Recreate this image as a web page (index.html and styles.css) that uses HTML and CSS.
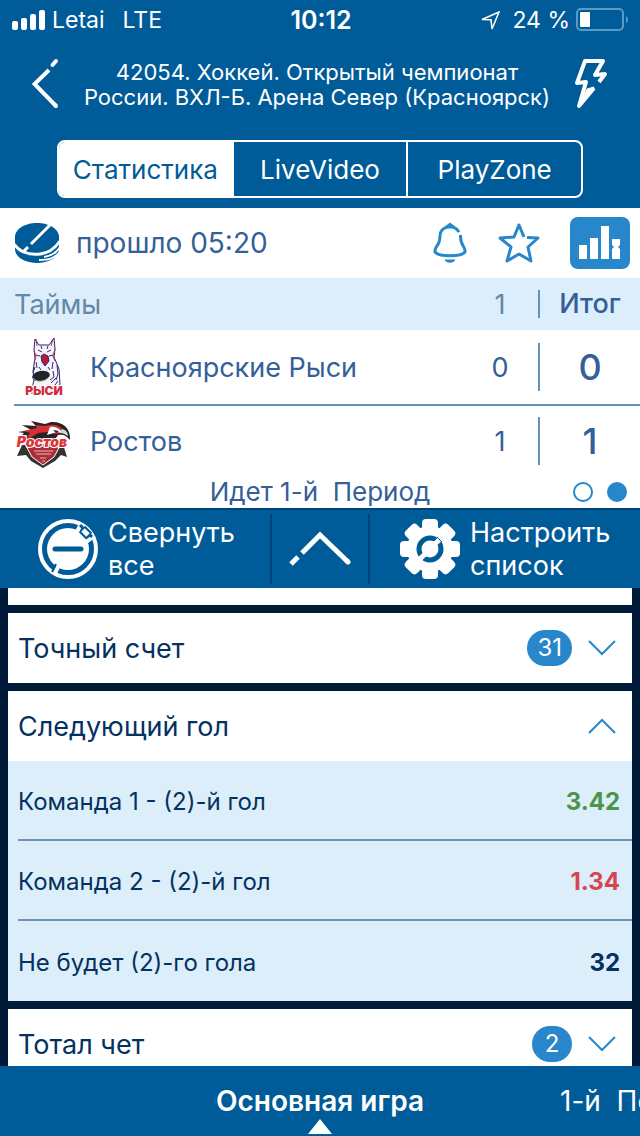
FILE: index.html
```html
<!DOCTYPE html>
<html lang="ru">
<head>
  <meta charset="UTF-8">
  <meta name="viewport" content="width=device-width, initial-scale=1.0">
  <title>Красноярские Рыси - Ростов</title>
  <link rel="stylesheet" href="styles.css">
</head>
<body>
  <header class="header">
    <div class="status-bar">
      <div class="status-left">
        <svg width="34" height="20" viewBox="0 0 34 20" fill="#fff">
          <rect x="0" y="11" width="6" height="9" rx="2"/>
          <rect x="9" y="8" width="6" height="12" rx="2"/>
          <rect x="18" y="4" width="6" height="16" rx="2"/>
          <rect x="27" y="0" width="6" height="20" rx="2"/>
        </svg>
        <span class="carrier">Letai</span>
        <span>LTE</span>
      </div>
      <span class="clock">10:12</span>
      <div class="status-right">
        <svg class="location" width="20" height="19" viewBox="0 0 20 19" fill="none" stroke="#fff" stroke-width="1.500">
          <path d="M2 8.500L19 1L12 18L11 8.800Z"/>
        </svg>
        <span>24 %</span>
        <svg width="54" height="24" viewBox="0 0 54 24">
          <rect x="1" y="1" width="46" height="21" rx="4" fill="none" stroke="#5c9ac6" stroke-width="2"/>
          <rect x="4" y="4" width="10" height="15" rx="1" fill="#fff"/>
          <path d="M50 8a4 4 0 0 1 0 7z" fill="#5c9ac6"/>
        </svg>
      </div>
    </div>

    <div class="title-row">
      <button class="icon-btn" aria-label="Назад">
        <svg width="28" height="52" viewBox="0 0 28 52" fill="none" stroke="#fff" stroke-width="4" stroke-linecap="round">
          <path d="M24 3L20.500 7" />
          <path d="M17 12L2.500 26L24 48" stroke-linejoin="miter" stroke-linecap="butt"/>
          <path d="M23 47L24 48"/>
        </svg>
      </button>
      <h1>42054. Хоккей. Открытый чемпионат России. ВХЛ-Б. Арена Север (Красноярск)</h1>
      <button class="icon-btn" aria-label="Быстрая ставка">
        <svg width="34" height="52" viewBox="0 0 34 52" fill="none" stroke="#fff" stroke-width="4" stroke-linejoin="round">
          <path d="M25 24L31 16L21 17L29 3H11L3 25L12 24L5 48L20 30"/>
          <path d="M13 31L20 29L5 49Z" fill="#fff" stroke-width="1"/>
        </svg>
      </button>
    </div>

    <nav class="segments">
      <button class="active">Статистика</button>
      <button>LiveVideo</button>
      <button>PlayZone</button>
    </nav>
  </header>

  <section class="score">
    <div class="event-row">
      <svg width="46" height="42" viewBox="0 0 46 42">
        <path d="M1 15C1 7 11 1 23 1s22 6 22 14v12c0 8-10 14-22 14S1 35 1 27z" fill="#005b99"/>
        <g fill="none" stroke="#fff">
          <path d="M0 22C6 31 16 33 26 32S42 25 46 19" stroke-width="3"/>
          <path d="M36 3L17 22M14 25L9 30" stroke-width="3"/>
          <path d="M46 25C42 32 36 34 30 35M46 30C40 37 34 38 25 38" stroke-width="2"/>
        </g>
      </svg>
      <span class="elapsed">прошло 05:20</span>
      <button class="icon-btn" aria-label="Уведомления">
        <svg width="36" height="42" viewBox="0 0 36 42" fill="none" stroke="#2787ca" stroke-width="3" stroke-linejoin="round">
          <path d="M27 10C24 5 20 5 18 3C15 6 8 6 8 14C8 25 2 24 3 30C7 35 29 35 33 30C34 24 28 25 28.500 13"/>
          <path d="M18 1L12 6H24Z" fill="#2787ca" stroke-width="1"/>
          <path d="M13 38C15 41 21 41 23 38Z" fill="#2787ca" stroke-width="1"/>
        </svg>
      </button>
      <button class="icon-btn" aria-label="В избранное">
        <svg width="42" height="42" viewBox="0 0 42 42" fill="none" stroke="#2787ca" stroke-width="3" stroke-linejoin="round">
          <path d="M26 15L21 3L16 15L2 16L13 25L9 39L21 32L33 39L30 25L40 16L29 15.500"/>
        </svg>
      </button>
      <button class="icon-btn stats-btn" aria-label="Статистика матча">
        <svg width="42" height="34" viewBox="0 0 42 34" fill="#fff">
          <rect x="0" y="19" width="8" height="14"/>
          <rect x="11" y="12" width="8" height="21"/>
          <rect x="22" y="0" width="8" height="33"/>
          <path d="M33 13h8v6l-2 2 2 2v10h-8V23l2-2-2-2z"/>
        </svg>
      </button>
    </div>

    <table class="score-table">
      <thead>
        <tr>
          <th class="team-col">Таймы</th>
          <th class="period-col">1</th>
          <th class="total-col"><span>Итог</span></th>
        </tr>
      </thead>
      <tbody>
        <tr class="home">
          <td class="team-col">
            <div class="team">
              <svg width="60" height="60" viewBox="0 0 60 60">
                <path d="M21 2l4 6h10l5-7 1 11-1 8 5 12 1 15-4 9H17l3-13-1-9 2-13-1-9z" fill="#f4f3fa" stroke="#2b2767" stroke-width="1"/>
                <path d="M22 2l1 7M39 2l-2 7M20 13l2 7-2 5M41 12l-2 7 2 5" fill="none" stroke="#b52c57" stroke-width="1"/>
                <path d="M24 13l4 2M37 13l-4 2M22 18l4 1M39 18l-4 1M27 9l1 3M34 9l-1 3" stroke="#302970" stroke-width="1"/>
                <path d="M27 19l3-2 4 2 1 5-4 5-3-4z" fill="#b61c38" stroke="#302970" stroke-width="1"/>
                <path d="M22 25l1 6M21 30l-2 6M39 25l-1 7M43 28l1 9-2 6M39 34l1 6-4 3M37 46l5-5M41 48l3-4M34 30l2 3M25 30l2 3" fill="none" stroke="#302970" stroke-width="1"/>
                <ellipse cx="27" cy="39" rx="9" ry="5" fill="#20252a" transform="rotate(-12 27 39)"/>
                <path d="M19 41c4 5 12 4 17-2" fill="none" stroke="#a8b39a" stroke-width="1"/>
                <text x="30" y="58" text-anchor="middle" class="lynx-text">РЫСИ</text>
              </svg>
              <span>Красноярские Рыси</span>
            </div>
          </td>
          <td class="period-col">0</td>
          <td class="total-col"><span>0</span></td>
        </tr>
        <tr>
          <td class="team-col">
            <div class="team">
              <svg width="60" height="60" viewBox="0 0 60 60">
                <path d="M8 34l-5 11 9-1 5 6 12 7 12-7 6-6 6 2-4-13z" fill="#363133"/>
                <path d="M12 35l6 11 11 8 11-8 6-11z" fill="#a92e38" stroke="#fff" stroke-width="1"/>
                <path d="M4 21l13-2-9-5 14 1-5-5 14 3 6-2c10-1 20 5 19 18-4-5-7-6-12-5l-4 6H10l3-6-6 1 3-3z" fill="#272426"/>
                <path d="M9 20l14-3-2-3 11 1c8-3 15 0 19 6l-9 2-8-2-10 1-8 5-3-1 3-4z" fill="#d92d35"/>
                <path d="M36 16c5-1 10 2 13 6l-6-1-10 3z" fill="#fff"/>
                <path d="M48 18c4 1 6 4 6 7-3-2-5-3-8-3z" fill="#d8d8da"/>
                <path d="M39 19l6 1-3 2z" fill="#272426"/>
                <text x="28" y="36" text-anchor="middle" class="rostov-text">Ростов</text>
                <path d="M20 40h19M22 43h15M26 47h6M28 50h3" stroke="#e4b9b9" stroke-width="1"/>
              </svg>
              <span>Ростов</span>
            </div>
          </td>
          <td class="period-col">1</td>
          <td class="total-col"><span>1</span></td>
        </tr>
      </tbody>
    </table>

    <div class="period-status">
      <span>Идет 1-й&nbsp; Период</span>
      <div class="dots"><i></i><i class="on"></i></div>
    </div>
  </section>

  <div class="toolbar">
    <button class="tool">
      <svg width="60" height="60" viewBox="0 0 60 60">
        <circle cx="30" cy="30" r="28" fill="none" stroke="#fff" stroke-width="4"/>
        <circle cx="30" cy="30" r="21" fill="#fff"/>
        <path d="M38 15L43 5M47 24L56 17M16 56L21 46" stroke="#fff" stroke-width="4"/>
        <path d="M42 6L54 18" stroke="#005b99" stroke-width="3"/>
        <path d="M44 10L51 17" stroke="#005b99" stroke-width="9"/>
        <path d="M45 11L50 16" stroke="#fff" stroke-width="5"/>
        <path d="M14 53L18 45" stroke="#005b99" stroke-width="2"/>
        <path d="M17 30H43" stroke="#005b99" stroke-width="5" stroke-linecap="round"/>
      </svg>
      <span>Свернуть все</span>
    </button>
    <button class="tool tool-up" aria-label="Наверх">
      <svg width="62" height="36" viewBox="0 0 62 36" fill="none" stroke="#fff" stroke-width="5">
        <path d="M13 22L31 4L59 31"/>
        <path d="M58 30L59 31" stroke-linecap="round"/>
        <path d="M9 26L2 33"/>
      </svg>
    </button>
    <button class="tool tool-last">
      <svg width="60" height="60" viewBox="0 0 60 60">
        <g fill="#fff">
          <circle cx="30" cy="30" r="23"/>
          <rect x="22" y="0" width="16" height="60" rx="4"/>
          <rect x="22" y="0" width="16" height="60" rx="4" transform="rotate(45 30 30)"/>
          <rect x="22" y="0" width="16" height="60" rx="4" transform="rotate(90 30 30)"/>
          <rect x="22" y="0" width="16" height="60" rx="4" transform="rotate(135 30 30)"/>
        </g>
        <circle cx="30" cy="30" r="11" fill="none" stroke="#005b99" stroke-width="5"/>
        <path d="M34 26L42 18M18 42L26 34" stroke="#fff" stroke-width="5"/>
        <path d="M37 18L42 23" stroke="#005b99" stroke-width="1"/>
      </svg>
      <span>Настроить список</span>
    </button>
  </div>

  <main class="markets">
    <div class="market market-cut"></div>

    <div class="market">
      <button class="market-head">
        <span class="market-name">Точный счет</span>
        <span class="badge">31</span>
        <svg width="28" height="16" viewBox="0 0 28 16" fill="none" stroke="#2787ca" stroke-width="2"><path d="M1 1L14 14L27 1"/></svg>
      </button>
    </div>

    <div class="market">
      <button class="market-head">
        <span class="market-name">Следующий гол</span>
        <svg width="28" height="16" viewBox="0 0 28 16" fill="none" stroke="#2787ca" stroke-width="2"><path d="M1 15L14 2L27 15"/></svg>
      </button>
      <div class="odds">
        <button class="odd"><span>Команда 1 - (2)-й гол</span><b class="up">3.42</b></button>
        <button class="odd"><span>Команда 2 - (2)-й гол</span><b class="down">1.34</b></button>
        <button class="odd"><span>Не будет (2)-го гола</span><b>32</b></button>
      </div>
    </div>

    <div class="market">
      <button class="market-head">
        <span class="market-name">Тотал чет</span>
        <span class="badge">2</span>
        <svg width="28" height="16" viewBox="0 0 28 16" fill="none" stroke="#2787ca" stroke-width="2"><path d="M1 1L14 14L27 1"/></svg>
      </button>
    </div>
  </main>

  <nav class="bottom-tabs">
    <button class="active">Основная игра</button>
    <button class="next">1-й&nbsp; Период</button>
  </nav>
</body>
</html>
```
FILE: styles.css
```css
* { box-sizing: border-box; }
body {
  margin: 0;
  height: 100vh;
  display: flex;
  flex-direction: column;
  overflow: hidden;
  font-family: Inter, "Liberation Sans", sans-serif;
  background: #001b39;
  color: #345f98;
}
button {
  padding: 0;
  border: none;
  background: none;
  font: inherit;
  color: inherit;
  cursor: pointer;
}
svg { display: block; flex-shrink: 0; }
.icon-btn { flex-shrink: 0; }

/* header */
.header { background: #005b99; color: #fff; padding-bottom: 10px; }
.status-bar {
  display: grid;
  grid-template-columns: 1fr auto 1fr;
  align-items: center;
  height: 40px;
  padding: 0 10px 0 12px;
  font-size: 23px;
}
.status-left, .status-right { display: flex; align-items: center; gap: 6px; }
.status-right { justify-content: flex-end; }
.carrier { margin-right: 12px; }
.location { margin-right: 6px; }
.clock { font-size: 25px; font-weight: 600; }
.title-row {
  display: flex;
  align-items: center;
  justify-content: space-between;
  height: 88px;
  padding: 0 32px;
}
.title-row h1 {
  flex: 1;
  margin: 0 20px;
  padding-top: 2px;
  font-size: 22px;
  font-weight: 400;
  line-height: 25px;
  text-align: center;
}
.segments {
  display: flex;
  margin: 12px 57px 0;
  border: 2px solid #fff;
  border-radius: 8px;
  overflow: hidden;
}
.segments button {
  flex: 1;
  height: 54px;
  font-size: 26px;
}
.segments button + button { border-left: 2px solid #fff; }
.segments .active { background: #fff; color: #005b99; }

/* score */
.score { background: #fff; }
.event-row {
  display: flex;
  align-items: center;
  height: 70px;
  padding: 0 10px 0 14px;
}
.elapsed { flex: 1; margin-left: 16px; font-size: 28px; }
.event-row .icon-btn { margin-left: 30px; }
.stats-btn {
  display: grid;
  place-items: center;
  width: 60px;
  height: 52px;
  border-radius: 8px;
  background: #2787ca;
}
.score-table { width: 100%; border-spacing: 0; font-size: 27px; }
.score-table th, .score-table td { padding: 0; }
.score-table th { height: 52px; background: #dceefc; font-weight: 400; color: #6488a5; }
.score-table td { height: 70px; }
.score-table .home td { height: 76px; border-bottom: 2px solid #6590b8; }
.score-table .home .team-col { border-bottom: none; }
.home .team { height: 76px; border-bottom: 2px solid #6590b8; }
.score-table .team-col { text-align: left; padding-left: 14px; }
.team { display: flex; align-items: center; gap: 16px; }
.score-table .period-col { width: 76px; text-align: center; }
.total-col { width: 102px; }
.total-col span {
  display: block;
  height: 48px;
  border-left: 2px solid #6590b8;
  font-size: 36px;
  font-weight: 500;
  line-height: 48px;
  text-align: center;
}
th.total-col span { height: 28px; line-height: 28px; font-size: 27px; color: #345f98; }
.lynx-text { font: 900 12px Inter, sans-serif; fill: #d22c3f; stroke: #fff; stroke-width: 2px; paint-order: stroke; }
.rostov-text { font: italic 900 14px Inter, sans-serif; fill: #e23338; stroke: #fff; stroke-width: 2px; paint-order: stroke; }
.period-status {
  display: grid;
  grid-template-columns: 1fr auto 1fr;
  align-items: center;
  height: 32px;
  padding: 0 13px;
  font-size: 26px;
  line-height: 30px;
}
.period-status > span { grid-column: 2; }
.dots { display: flex; justify-content: flex-end; gap: 14px; }
.dots i { width: 20px; height: 20px; border: 2px solid #2787ca; border-radius: 50%; }
.dots .on { background: #2787ca; }

/* toolbar */
.toolbar {
  display: grid;
  grid-template-columns: minmax(0, 1fr) 100px minmax(0, 1fr);
  height: 80px;
  flex-shrink: 0;
  align-items: center;
  border-top: 2px solid #004379;
  background: #005b99;
  color: #fff;
}
.tool {
  display: flex;
  align-items: center;
  gap: 10px;
  height: 70px;
  padding-left: 38px;
  font-size: 27px;
  line-height: 33px;
  text-align: left;
}
.tool-up {
  justify-content: center;
  padding: 0;
  border: solid #004379;
  border-width: 0 2px;
}
.tool-last { padding-left: 30px; }

/* markets */
.markets {
  flex: 1;
  min-height: 0;
  overflow: hidden;
  display: flex;
  flex-direction: column;
  gap: 8px;
  padding: 0 8px;
}
.market { flex-shrink: 0; background: #fff; color: #04315f; }
.market-cut { height: 17px; }
.market-head {
  display: flex;
  align-items: center;
  width: 100%;
  height: 70px;
  padding: 0 16px 0 10px;
  font-size: 27px;
}
.market-name { flex: 1; text-align: left; }
.badge {
  min-width: 40px;
  height: 36px;
  margin-right: 16px;
  padding: 0 10px;
  border-radius: 18px;
  background: #2787ca;
  color: #fff;
  font-size: 24px;
  line-height: 36px;
  text-align: center;
}
.odds { padding-left: 10px; background: #dceefa; }
.odd {
  display: flex;
  align-items: center;
  justify-content: space-between;
  width: 100%;
  height: 80px;
  padding: 2px 12px 0 0;
  border-bottom: 2px solid #7293af;
  font-size: 24px;
}
.odd:last-child { border-bottom: none; }
.up { color: #4c9447; }
.down { color: #d7464e; }

/* bottom */
.bottom-tabs {
  display: grid;
  grid-template-columns: minmax(0, 1fr) auto minmax(0, 1fr);
  flex-shrink: 0;
  height: 70px;
  background: #005b99;
  color: #fff;
  font-size: 28px;
  white-space: nowrap;
  overflow: hidden;
}
.bottom-tabs .active { grid-column: 2; position: relative; font-weight: 600; }
.bottom-tabs .active::after {
  content: '';
  position: absolute;
  bottom: 2px;
  left: 50%;
  margin-left: -12px;
  border: solid transparent;
  border-width: 0 12px 15px;
  border-bottom-color: #fff;
}
.next { justify-self: start; padding-left: 136px; }
```
